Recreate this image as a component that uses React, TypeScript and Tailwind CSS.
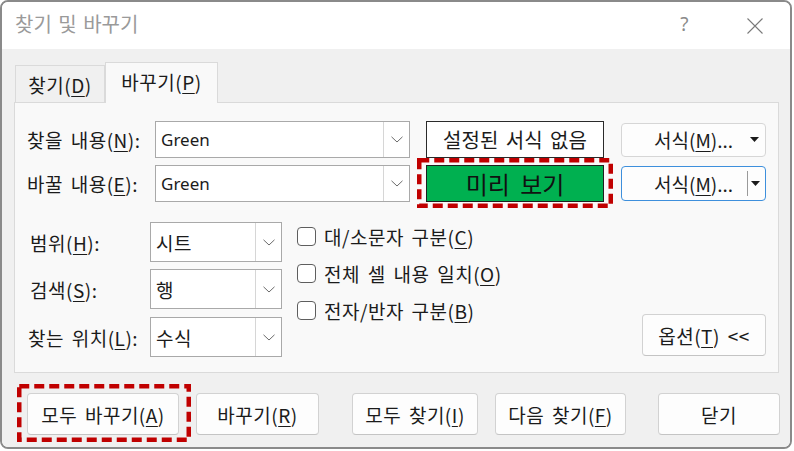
import React from "react"

function U({ children }: { children: React.ReactNode }) {
  return <span className="underline decoration-1 underline-offset-[3px]">{children}</span>
}

function Chevron() {
  return (
    <svg width="12" height="7" viewBox="0 0 12 7" fill="none">
      <path d="M0.5 0.8 L6 6 L11.5 0.8" stroke="#6b6b6b" strokeWidth="1" />
    </svg>
  )
}

function Combo({ value, latin }: { value: string; latin?: boolean }) {
  return (
    <div className="flex h-full w-full border border-[#a9a9a9] bg-white">
      <div
        className={
          "flex flex-1 items-center pl-[5px] " +
          (latin ? "font-['Noto_Sans','Noto_Sans_CJK_KR',sans-serif] text-[17px] tracking-normal" : "")
        }
      >
        {value}
      </div>
      <div className="flex w-[26px] items-center justify-center border-l border-[#d6d6d6]">
        <Chevron />
      </div>
    </div>
  )
}

function Btn({ className, children }: { className?: string; children: React.ReactNode }) {
  return (
    <div
      className={
        "flex h-[42px] items-center justify-center rounded-[4px] border border-[#d2d2d2] border-b-[#c4c4c4] bg-[#fdfdfd] " +
        (className || "")
      }
    >
      {children}
    </div>
  )
}

function Caret() {
  return (
    <svg width="9" height="5" viewBox="0 0 9 5">
      <path d="M0 0 H9 L4.5 5 Z" fill="#1b1b1b" />
    </svg>
  )
}

// red dashed annotation drawn over a control
function Marker({ w, h, className }: { w: number; h: number; className: string }) {
  return (
    <svg width={w} height={h} className={"pointer-events-none absolute " + className}>
      <rect
        x="2.25"
        y="2.25"
        width={w - 4.5}
        height={h - 4.5}
        fill="none"
        stroke="#c00000"
        strokeWidth="4.5"
        strokeDasharray="10 5"
      />
    </svg>
  )
}

function Check({ children }: { children: React.ReactNode }) {
  return (
    <div className="flex h-[19px] items-center">
      <div className="h-[19px] w-[19px] shrink-0 rounded-[4px] border border-[#5e5e5e] bg-white" />
      <span className="ml-[8px] whitespace-nowrap">{children}</span>
    </div>
  )
}

export default function App() {
  return (
    <div className="h-[451px] w-[794px] bg-white font-['Noto_Sans_CJK_KR',sans-serif] text-[19px] leading-none tracking-[0.5px] text-[#1b1b1b] [word-spacing:3px]">
      <div className="flex h-[449px] w-[792px] flex-col overflow-hidden rounded-[8px] border-2 border-[#8a8a8a]">
        {/* title bar */}
        <div className="flex h-[47px] items-center bg-white pl-[13px] pr-[27px]">
          <span className="pb-[3px] text-[20px] tracking-normal text-[#9a9a9a] [word-spacing:2px]">
            찾기 및 바꾸기
          </span>
          <span className="ml-auto pb-[2px] font-['Noto_Sans',sans-serif] text-[19px] text-[#8a8a8a]">?</span>
          <svg width="16" height="16" viewBox="0 0 16 16" className="ml-[58px]">
            <path d="M0.5 0.5 L15.5 15.5 M15.5 0.5 L0.5 15.5" stroke="#7a7a7a" strokeWidth="1.1" />
          </svg>
        </div>

        {/* body */}
        <div className="flex flex-1 flex-col bg-[#f0f0f0] pl-[12px]">
          <div className="mt-[13px] flex h-[40px] items-end">
            <div className="ml-[1px] flex h-[37px] w-[90px] items-center justify-center border border-b-0 border-[#dadada] bg-[#f0f0f0]">
              찾기(<U>D</U>)
            </div>
            <div className="relative z-10 -mb-px flex h-[41px] w-[113px] items-center justify-center border border-b-0 border-[#dadada] bg-[#f9f9f9] pb-[3px]">
              바꾸기(<U>P</U>)
            </div>
          </div>

          <div className="h-[271px] w-[765px] border border-[#dadada] bg-[#f9f9f9] px-[12px] pt-[18px]">
            {/* find / replace rows */}
            <div className="flex h-[37px] items-center">
              <div className="w-[128px] whitespace-nowrap">
                찾을 내용(<U>N</U>):
              </div>
              <div className="h-full w-[255px]">
                <Combo value="Green" latin />
              </div>
              <div className="ml-[16px] flex h-full w-[178px] items-center justify-center border border-[#2a2a2a] bg-white text-[20px] tracking-normal">
                설정된 서식 없음
              </div>
              <div className="ml-[17px] flex h-[34px] w-[145px] items-center rounded-[4px] border border-[#d6d6d6] bg-[#fdfdfd]">
                <span className="ml-[32px] whitespace-nowrap tracking-normal">
                  서식(<U>M</U>)...
                </span>
                <span className="ml-auto mr-[6px] flex">
                  <Caret />
                </span>
              </div>
            </div>
            <div className="mt-[7px] flex h-[37px] items-center">
              <div className="w-[128px] whitespace-nowrap">
                바꿀 내용(<U>E</U>):
              </div>
              <div className="h-full w-[255px]">
                <Combo value="Green" latin />
              </div>
              <div className="relative ml-[16px] h-full w-[178px]">
                <div className="flex h-full w-full items-center justify-center border border-[#1e1e1e] bg-[#00b050] text-[24px] tracking-normal text-[#111] [word-spacing:5px]">
                  미리 보기
                </div>
                <Marker w={196} h={50} className="-left-[9px] -top-[7px]" />
              </div>
              <div className="ml-[17px] flex h-[35px] w-[145px] items-center rounded-[4px] border border-[#3d8fdc] bg-[#fdfdfd]">
                <span className="ml-[32px] whitespace-nowrap tracking-normal">
                  서식(<U>M</U>)...
                </span>
                <span className="ml-auto h-[25px] w-px bg-[#9a9a9a]" />
                <span className="ml-[3px] mr-[5px] flex">
                  <Caret />
                </span>
              </div>
            </div>

            {/* options */}
            <div className="mt-[20px] flex">
              <div className="ml-[3px] flex flex-col">
                <div className="flex h-[40px] items-center">
                  <div className="w-[120px] whitespace-nowrap">
                    범위(<U>H</U>):
                  </div>
                  <div className="h-full w-[132px]">
                    <Combo value="시트" />
                  </div>
                </div>
                <div className="mt-[7px] flex h-[40px] items-center">
                  <div className="w-[120px] whitespace-nowrap">
                    검색(<U>S</U>):
                  </div>
                  <div className="h-full w-[132px]">
                    <Combo value="행" />
                  </div>
                </div>
                <div className="mt-[8px] flex h-[40px] items-center">
                  <div className="-ml-[2px] w-[122px] whitespace-nowrap">
                    찾는 위치(<U>L</U>):
                  </div>
                  <div className="h-full w-[132px]">
                    <Combo value="수식" />
                  </div>
                </div>
              </div>
              <div className="ml-[15px] flex flex-col gap-[18px] pt-[5px]">
                <Check>
                  대/소문자 구분(<U>C</U>)
                </Check>
                <Check>
                  전체 셀 내용 일치(<U>O</U>)
                </Check>
                <Check>
                  전자/반자 구분(<U>B</U>)
                </Check>
              </div>
              <Btn className="mb-[1px] ml-auto w-[124px] self-end">
                옵션(<U>T</U>) &lt;&lt;
              </Btn>
            </div>
          </div>

          {/* bottom buttons */}
          <div className="mt-[20px] flex pl-[13px]">
            <div className="relative">
              <Btn className="w-[152px]">
                모두 바꾸기(<U>A</U>)
              </Btn>
              <Marker w={174} h={58} className="-left-[10px] -top-[9px]" />
            </div>
            <Btn className="ml-[17px] w-[123px]">
              바꾸기(<U>R</U>)
            </Btn>
            <Btn className="ml-[33px] w-[126px] border-[#c9d5e2]">
              모두 찾기(<U>I</U>)
            </Btn>
            <Btn className="ml-[17px] w-[131px] border-[#c9d5e2]">
              다음 찾기(<U>F</U>)
            </Btn>
            <Btn className="ml-[32px] w-[122px]">닫기</Btn>
          </div>
        </div>
      </div>
    </div>
  )
}
